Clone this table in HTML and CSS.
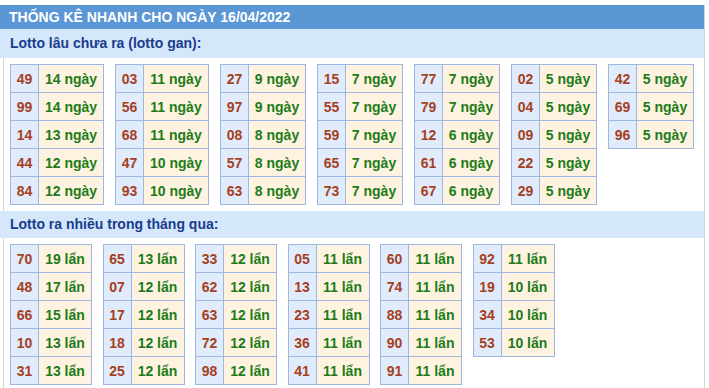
FILE: index.html
```html
<!DOCTYPE html>
<html lang="vi">
<head>
<meta charset="utf-8">
<title>Thống kê nhanh</title>
<link rel="stylesheet" href="styles.css">
</head>
<body>
<div class="box">
  <div class="title">THỐNG KÊ NHANH CHO NGÀY 16/04/2022</div>
  <div class="sub">Lotto lâu chưa ra (lotto gan):</div>
  <div class="groups">
    <table class="lt wide"><tr><td class="n">49</td><td class="v">14 ngày</td></tr><tr><td class="n">99</td><td class="v">14 ngày</td></tr><tr><td class="n">14</td><td class="v">13 ngày</td></tr><tr><td class="n">44</td><td class="v">12 ngày</td></tr><tr><td class="n">84</td><td class="v">12 ngày</td></tr></table>
    <table class="lt wide"><tr><td class="n">03</td><td class="v">11 ngày</td></tr><tr><td class="n">56</td><td class="v">11 ngày</td></tr><tr><td class="n">68</td><td class="v">11 ngày</td></tr><tr><td class="n">47</td><td class="v">10 ngày</td></tr><tr><td class="n">93</td><td class="v">10 ngày</td></tr></table>
    <table class="lt mid"><tr><td class="n">27</td><td class="v">9 ngày</td></tr><tr><td class="n">97</td><td class="v">9 ngày</td></tr><tr><td class="n">08</td><td class="v">8 ngày</td></tr><tr><td class="n">57</td><td class="v">8 ngày</td></tr><tr><td class="n">63</td><td class="v">8 ngày</td></tr></table>
    <table class="lt mid"><tr><td class="n">15</td><td class="v">7 ngày</td></tr><tr><td class="n">55</td><td class="v">7 ngày</td></tr><tr><td class="n">59</td><td class="v">7 ngày</td></tr><tr><td class="n">65</td><td class="v">7 ngày</td></tr><tr><td class="n">73</td><td class="v">7 ngày</td></tr></table>
    <table class="lt mid"><tr><td class="n">77</td><td class="v">7 ngày</td></tr><tr><td class="n">79</td><td class="v">7 ngày</td></tr><tr><td class="n">12</td><td class="v">6 ngày</td></tr><tr><td class="n">61</td><td class="v">6 ngày</td></tr><tr><td class="n">67</td><td class="v">6 ngày</td></tr></table>
    <table class="lt mid"><tr><td class="n">02</td><td class="v">5 ngày</td></tr><tr><td class="n">04</td><td class="v">5 ngày</td></tr><tr><td class="n">09</td><td class="v">5 ngày</td></tr><tr><td class="n">22</td><td class="v">5 ngày</td></tr><tr><td class="n">29</td><td class="v">5 ngày</td></tr></table>
    <table class="lt mid"><tr><td class="n">42</td><td class="v">5 ngày</td></tr><tr><td class="n">69</td><td class="v">5 ngày</td></tr><tr><td class="n">96</td><td class="v">5 ngày</td></tr></table>
  </div>
  <div class="sub sub2">Lotto ra nhiều trong tháng qua:</div>
  <div class="groups groups2">
    <table class="lt lan"><tr><td class="n">70</td><td class="v">19 lẩn</td></tr><tr><td class="n">48</td><td class="v">17 lẩn</td></tr><tr><td class="n">66</td><td class="v">15 lẩn</td></tr><tr><td class="n">10</td><td class="v">13 lẩn</td></tr><tr><td class="n">31</td><td class="v">13 lẩn</td></tr></table>
    <table class="lt lan"><tr><td class="n">65</td><td class="v">13 lẩn</td></tr><tr><td class="n">07</td><td class="v">12 lẩn</td></tr><tr><td class="n">17</td><td class="v">12 lẩn</td></tr><tr><td class="n">18</td><td class="v">12 lẩn</td></tr><tr><td class="n">25</td><td class="v">12 lẩn</td></tr></table>
    <table class="lt lan"><tr><td class="n">33</td><td class="v">12 lẩn</td></tr><tr><td class="n">62</td><td class="v">12 lẩn</td></tr><tr><td class="n">63</td><td class="v">12 lẩn</td></tr><tr><td class="n">72</td><td class="v">12 lẩn</td></tr><tr><td class="n">98</td><td class="v">12 lẩn</td></tr></table>
    <table class="lt lan"><tr><td class="n">05</td><td class="v">11 lẩn</td></tr><tr><td class="n">13</td><td class="v">11 lẩn</td></tr><tr><td class="n">23</td><td class="v">11 lẩn</td></tr><tr><td class="n">36</td><td class="v">11 lẩn</td></tr><tr><td class="n">41</td><td class="v">11 lẩn</td></tr></table>
    <table class="lt lan"><tr><td class="n">60</td><td class="v">11 lẩn</td></tr><tr><td class="n">74</td><td class="v">11 lẩn</td></tr><tr><td class="n">88</td><td class="v">11 lẩn</td></tr><tr><td class="n">90</td><td class="v">11 lẩn</td></tr><tr><td class="n">91</td><td class="v">11 lẩn</td></tr></table>
    <table class="lt lan"><tr><td class="n">92</td><td class="v">11 lẩn</td></tr><tr><td class="n">19</td><td class="v">10 lẩn</td></tr><tr><td class="n">34</td><td class="v">10 lẩn</td></tr><tr><td class="n">53</td><td class="v">10 lẩn</td></tr></table>
  </div>
</div>
</body>
</html>
```

FILE: styles.css
```css
html, body {
  margin: 0;
  padding: 0;
  background: #ffffff;
}
body {
  padding-top: 5px;
  font-family: "Liberation Sans", Arial, sans-serif;
}
.box {
  margin-left: 3px;
  width: 702px;
  border-left: 1px solid #d4d4d4;
  border-right: 1px solid #d4d4d4;
  min-height: 383px;
  box-sizing: border-box;
}
.title {
  margin-left: -4px;
  height: 24px;
  line-height: 25px;
  padding-left: 9px;
  background: #5b96d5;
  color: #ffffff;
  font-size: 14px;
  font-weight: bold;
}
.sub {
  margin-left: -4px;
  height: 29px;
  line-height: 28px;
  padding-left: 10px;
  background: #d5e7fb;
  color: #193c8c;
  font-size: 14px;
  font-weight: bold;
}
.sub2 {
  height: 27px;
  line-height: 27px;
}
.groups {
  display: flex;
  align-items: flex-start;
  gap: 11px;
  padding: 6px 0 6px 6px;
}
.groups2 {
  gap: 10.5px;
}
.lt {
  border-collapse: separate;
  border-spacing: 0;
  border-top: 1px solid #9db6e2;
  border-left: 1px solid #9db6e2;
  font-size: 14px;
  font-weight: bold;
  table-layout: fixed;
}
.lt td {
  box-sizing: border-box;
  border-right: 1px solid #9db6e2;
  border-bottom: 1px solid #9db6e2;
  height: 28px;
  padding: 0;
  text-align: center;
  white-space: nowrap;
}
.lt .n {
  width: 28px;
  background: #e0ecfb;
  color: #a63f1f;
}
.lt .v {
  background: #fef3e1;
  color: #1d7c19;
}
.wide .v {
  width: 65px;
}
.mid .v {
  width: 57px;
}
.lan .v {
  width: 53px;
}
```
